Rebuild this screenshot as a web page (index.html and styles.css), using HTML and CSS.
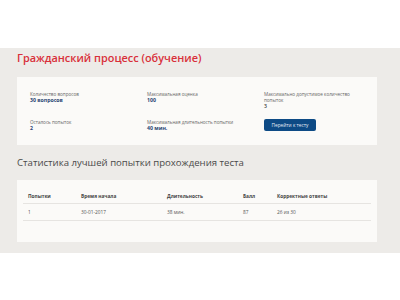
FILE: index.html
```html
<!DOCTYPE html>
<html lang="ru">
<head>
<meta charset="utf-8">
<link rel="stylesheet" href="styles.css">
</head>
<body>
<div class="top"></div>
<section class="main">
  <h1 class="title">Гражданский процесс (обучение)</h1>
  <div class="card info">
    <div class="item"><div class="label">Количество вопросов</div><div class="value">30 вопросов</div></div>
    <div class="item"><div class="label">Максимальная оценка</div><div class="value">100</div></div>
    <div class="item"><div class="label">Максимально допустимое количество<br>попыток</div><div class="value plain">3</div></div>
    <div class="item"><div class="label">Осталось попыток</div><div class="value">2</div></div>
    <div class="item"><div class="label">Максимальная длительность попытки</div><div class="value">40 мин.</div></div>
    <div class="item"><button class="btn">Перейти к тесту</button></div>
  </div>
  <h2 class="subtitle">Статистика лучшей попытки прохождения теста</h2>
  <div class="card stats">
    <table class="tbl">
      <thead>
        <tr><th class="c1">Попытки</th><th class="c2">Время начала</th><th class="c3">Длительность</th><th class="c4">Балл</th><th>Корректные ответы</th></tr>
      </thead>
      <tbody>
        <tr><td>1</td><td>30-01-2017</td><td>38 мин.</td><td>87</td><td>26 из 30</td></tr>
      </tbody>
    </table>
  </div>
</section>
</body>
</html>
```
FILE: styles.css
```css
html, body { margin: 0; padding: 0; background: #fff; }
body { font-family: "Open Sans", "Noto Sans", sans-serif; width: 400px; height: 300px; overflow: hidden; }
.top { height: 48px; background: #fff; }
.main { background: #edebe8; padding: 2px 23px 13px 17px; height: 190px; }
.title { margin: 0; font-size: 10.9px; line-height: 16px; font-weight: 600; color: #d9303a; }
.card { background: #fbfaf8; }
.info { margin-top: 11px; padding: 14px 13px 13px 13px; display: grid; grid-template-columns: 117px 117px 1fr; row-gap: 9px; }
.label { font-size: 4.6px; line-height: 6px; color: #666; }
.value { font-size: 5.2px; line-height: 7px; font-weight: 700; color: #2a4573; }
.value.plain { font-weight: 600; color: #333; }
.btn { display: block; width: 52px; height: 12px; padding: 0; border: 0; border-radius: 2px; background: #0d4a85; color: #e6ecf5; font-family: "Open Sans", sans-serif; font-size: 4.8px; line-height: 12px; text-align: center; }
.subtitle { margin: 11px 0 0; font-size: 9.6px; line-height: 14px; font-weight: 400; color: #4a4a4a; }
.stats { margin-top: 10px; padding: 12px 6px 21px 6px; }
.tbl { width: 100%; border-collapse: collapse; font-size: 4.8px; color: #555; }
.tbl th { text-align: left; font-weight: 700; line-height: 8px; padding: 0 0 3px 5px; border-bottom: 1px solid #e6e4e1; color: #444; }
.tbl td { line-height: 8px; padding: 4px 0 4px 5px; border-bottom: 1px solid #e6e4e1; }
.c1 { width: 48px; }
.c2 { width: 81px; }
.c3 { width: 71px; }
.c4 { width: 29px; }
```
